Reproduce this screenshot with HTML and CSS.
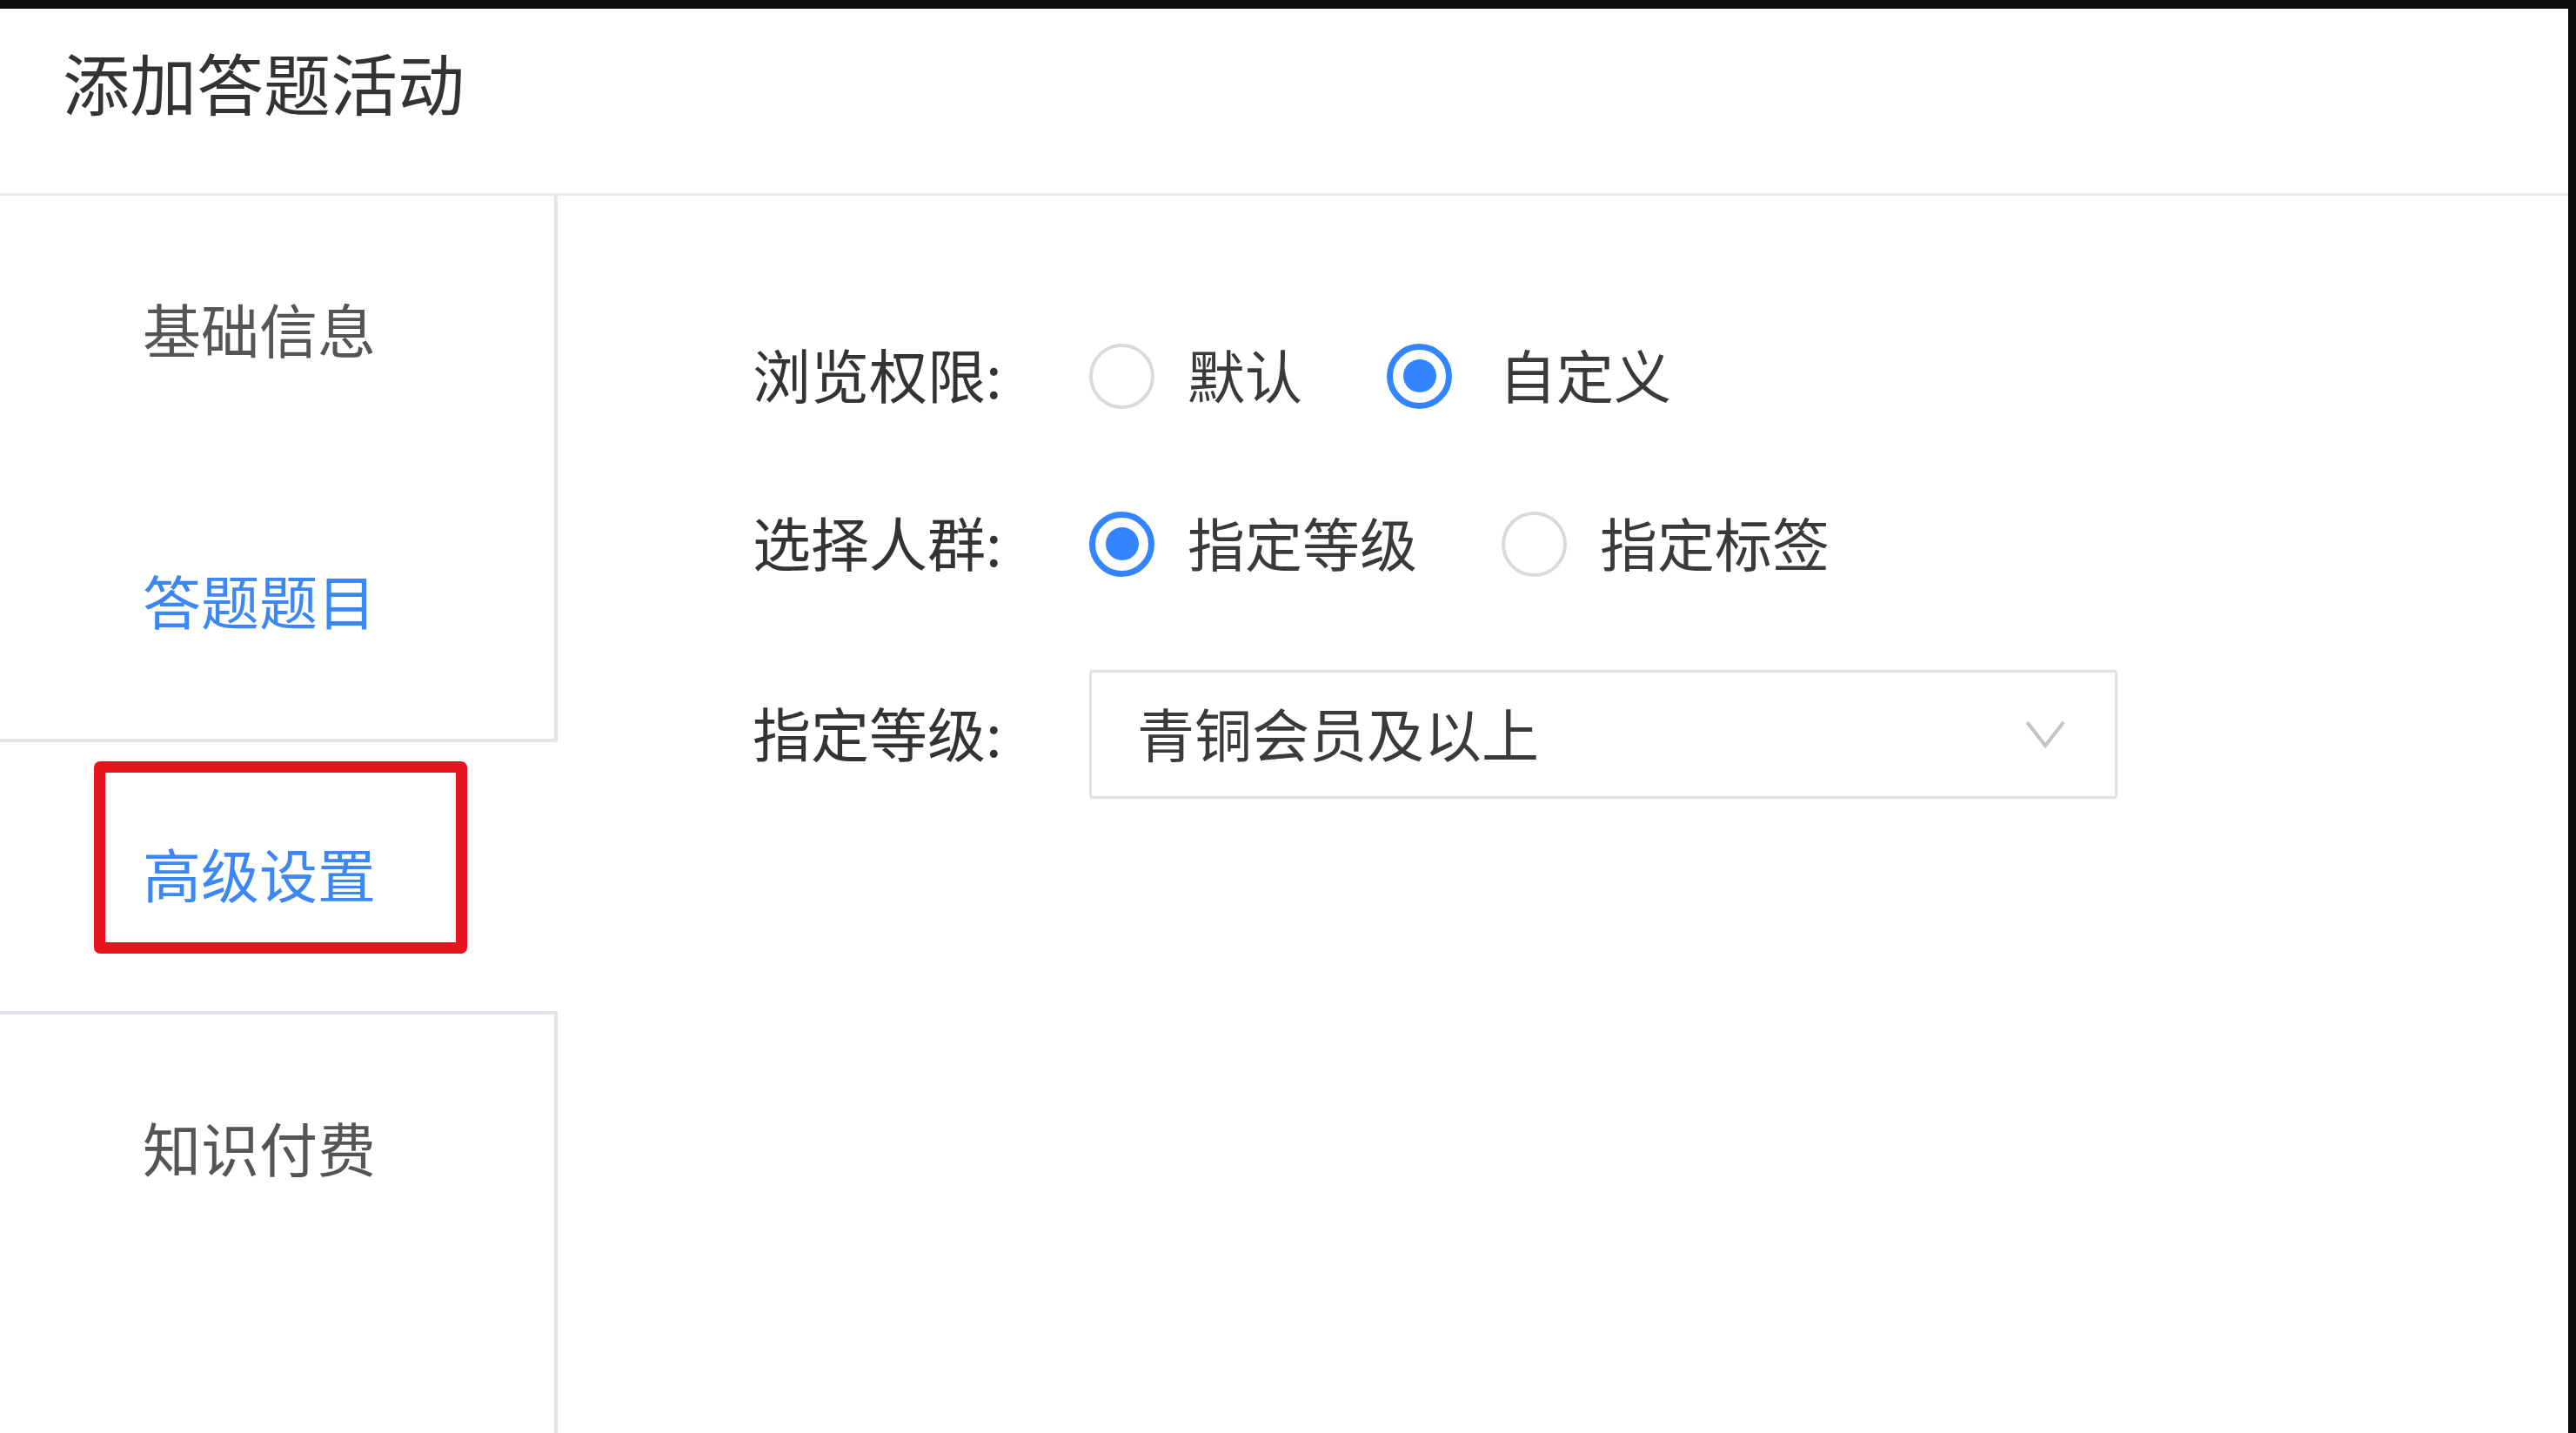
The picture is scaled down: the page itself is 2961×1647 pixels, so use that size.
FILE: index.html
```html
<!DOCTYPE html>
<html lang="zh-CN">
<head>
<meta charset="utf-8">
<title>添加答题活动</title>
<link rel="stylesheet" href="styles.css">
</head>
<body>
<div class="frame">
  <header class="header">
    <h1 class="title">添加答题活动</h1>
  </header>
  <div class="body">
    <nav class="sidebar">
      <div class="tab">基础信息</div>
      <div class="tab tab-blue">答题题目</div>
      <div class="tab tab-active tab-blue">高级设置<span class="mark"></span></div>
      <div class="tab">知识付费</div>
      <div class="tab-fill"></div>
    </nav>
    <main class="main">
      <div class="row row-1">
        <div class="label">浏览权限:</div>
        <div class="radios">
          <div class="radio"><span class="dot"></span><span class="radio-text">默认</span></div>
          <div class="radio"><span class="dot dot-on"></span><span class="radio-text radio-text-wide">自定义</span></div>
        </div>
      </div>
      <div class="row row-2">
        <div class="label">选择人群:</div>
        <div class="radios">
          <div class="radio"><span class="dot dot-on"></span><span class="radio-text">指定等级</span></div>
          <div class="radio"><span class="dot"></span><span class="radio-text">指定标签</span></div>
        </div>
      </div>
      <div class="row row-3">
        <div class="label">指定等级:</div>
        <div class="select">
          <span class="select-text">青铜会员及以上</span>
          <svg class="chev" width="48" height="34" viewBox="0 0 48 34"><path d="M3 3 L24 30 L45 3" fill="none" stroke="#c4c4c8" stroke-width="4"/></svg>
        </div>
      </div>
    </main>
  </div>
</div>
</body>
</html>
```
FILE: styles.css
```css
html, body {
  margin: 0;
  padding: 0;
  background: #ffffff;
}
body {
  font-family: "Noto Sans CJK SC", "Noto Sans", sans-serif;
  color: #333333;
}
.frame {
  box-sizing: border-box;
  height: 1647px;
  border-top: 10px solid #0b0b0b;
  border-right: 9px solid #0b0b0b;
  display: flex;
  flex-direction: column;
  overflow: hidden;
}
.header {
  box-sizing: border-box;
  height: 215px;
  border-bottom: 3px solid #ebebeb;
  padding: 45px 0 0 72px;
  flex: none;
}
.title {
  margin: 0;
  font-size: 77px;
  line-height: 77px;
  font-weight: 400;
  color: #333333;
}
.body {
  flex: 1;
  display: flex;
  min-height: 0;
}
.sidebar {
  width: 641px;
  flex: none;
  display: flex;
  flex-direction: column;
}
.tab {
  box-sizing: border-box;
  height: 312px;
  flex: none;
  display: flex;
  align-items: center;
  padding-left: 164px;
  padding-bottom: 9px;
  font-size: 67px;
  line-height: 1;
  color: #555555;
  border-right: 4px solid #e4e4ec;
  position: relative;
}
.tab-blue {
  color: #3b87f5;
}
.tab-active {
  border-right: none;
  border-top: 4px solid #e4e4ec;
  border-bottom: 4px solid #e4e4ec;
  height: 317px;
  padding-top: 0;
  padding-bottom: 10px;
}
.mark {
  position: absolute;
  left: 108px;
  top: 22px;
  width: 429px;
  height: 221px;
  box-sizing: border-box;
  border: 13px solid #e8131d;
  border-radius: 7px;
}
.tab-fill {
  flex: 1;
  border-right: 4px solid #e4e4ec;
}
.main {
  flex: 1;
  padding: 152px 0 0 224px;
}
.row {
  display: flex;
  align-items: center;
}
.row-1, .row-2 {
  height: 110px;
}
.row-2 {
  margin-top: 83px;
}
.row-3 {
  margin-top: 90px;
}
.label {
  width: 387px;
  flex: none;
  font-size: 67px;
  line-height: 1;
  padding-bottom: 8px;
  color: #333333;
}
.radios {
  display: flex;
  align-items: center;
}
.radio {
  display: flex;
  align-items: center;
  margin-right: 97px;
}
.dot {
  box-sizing: border-box;
  width: 75px;
  height: 75px;
  border-radius: 50%;
  border: 4px solid #dadada;
  margin-right: 38px;
  display: flex;
  align-items: center;
  justify-content: center;
  flex: none;
}
.dot-on {
  border: 7px solid #3385ff;
}
.dot-on::after {
  content: "";
  width: 38px;
  height: 38px;
  border-radius: 50%;
  background: #3385ff;
}
.radio-text {
  font-size: 66px;
  line-height: 1;
  padding-bottom: 6px;
  color: #3a3a3a;
}
.radio-text-wide {
  margin-left: 16px;
}
.select {
  box-sizing: border-box;
  width: 1182px;
  height: 148px;
  border: 3px solid #e0e1e7;
  border-radius: 4px;
  display: flex;
  align-items: center;
  justify-content: space-between;
  padding: 0 56px 0 52px;
}
.select-text {
  font-size: 66px;
  line-height: 1;
  padding-bottom: 6px;
  color: #3a3a3a;
}
.chev {
  display: block;
  flex: none;
}
```
